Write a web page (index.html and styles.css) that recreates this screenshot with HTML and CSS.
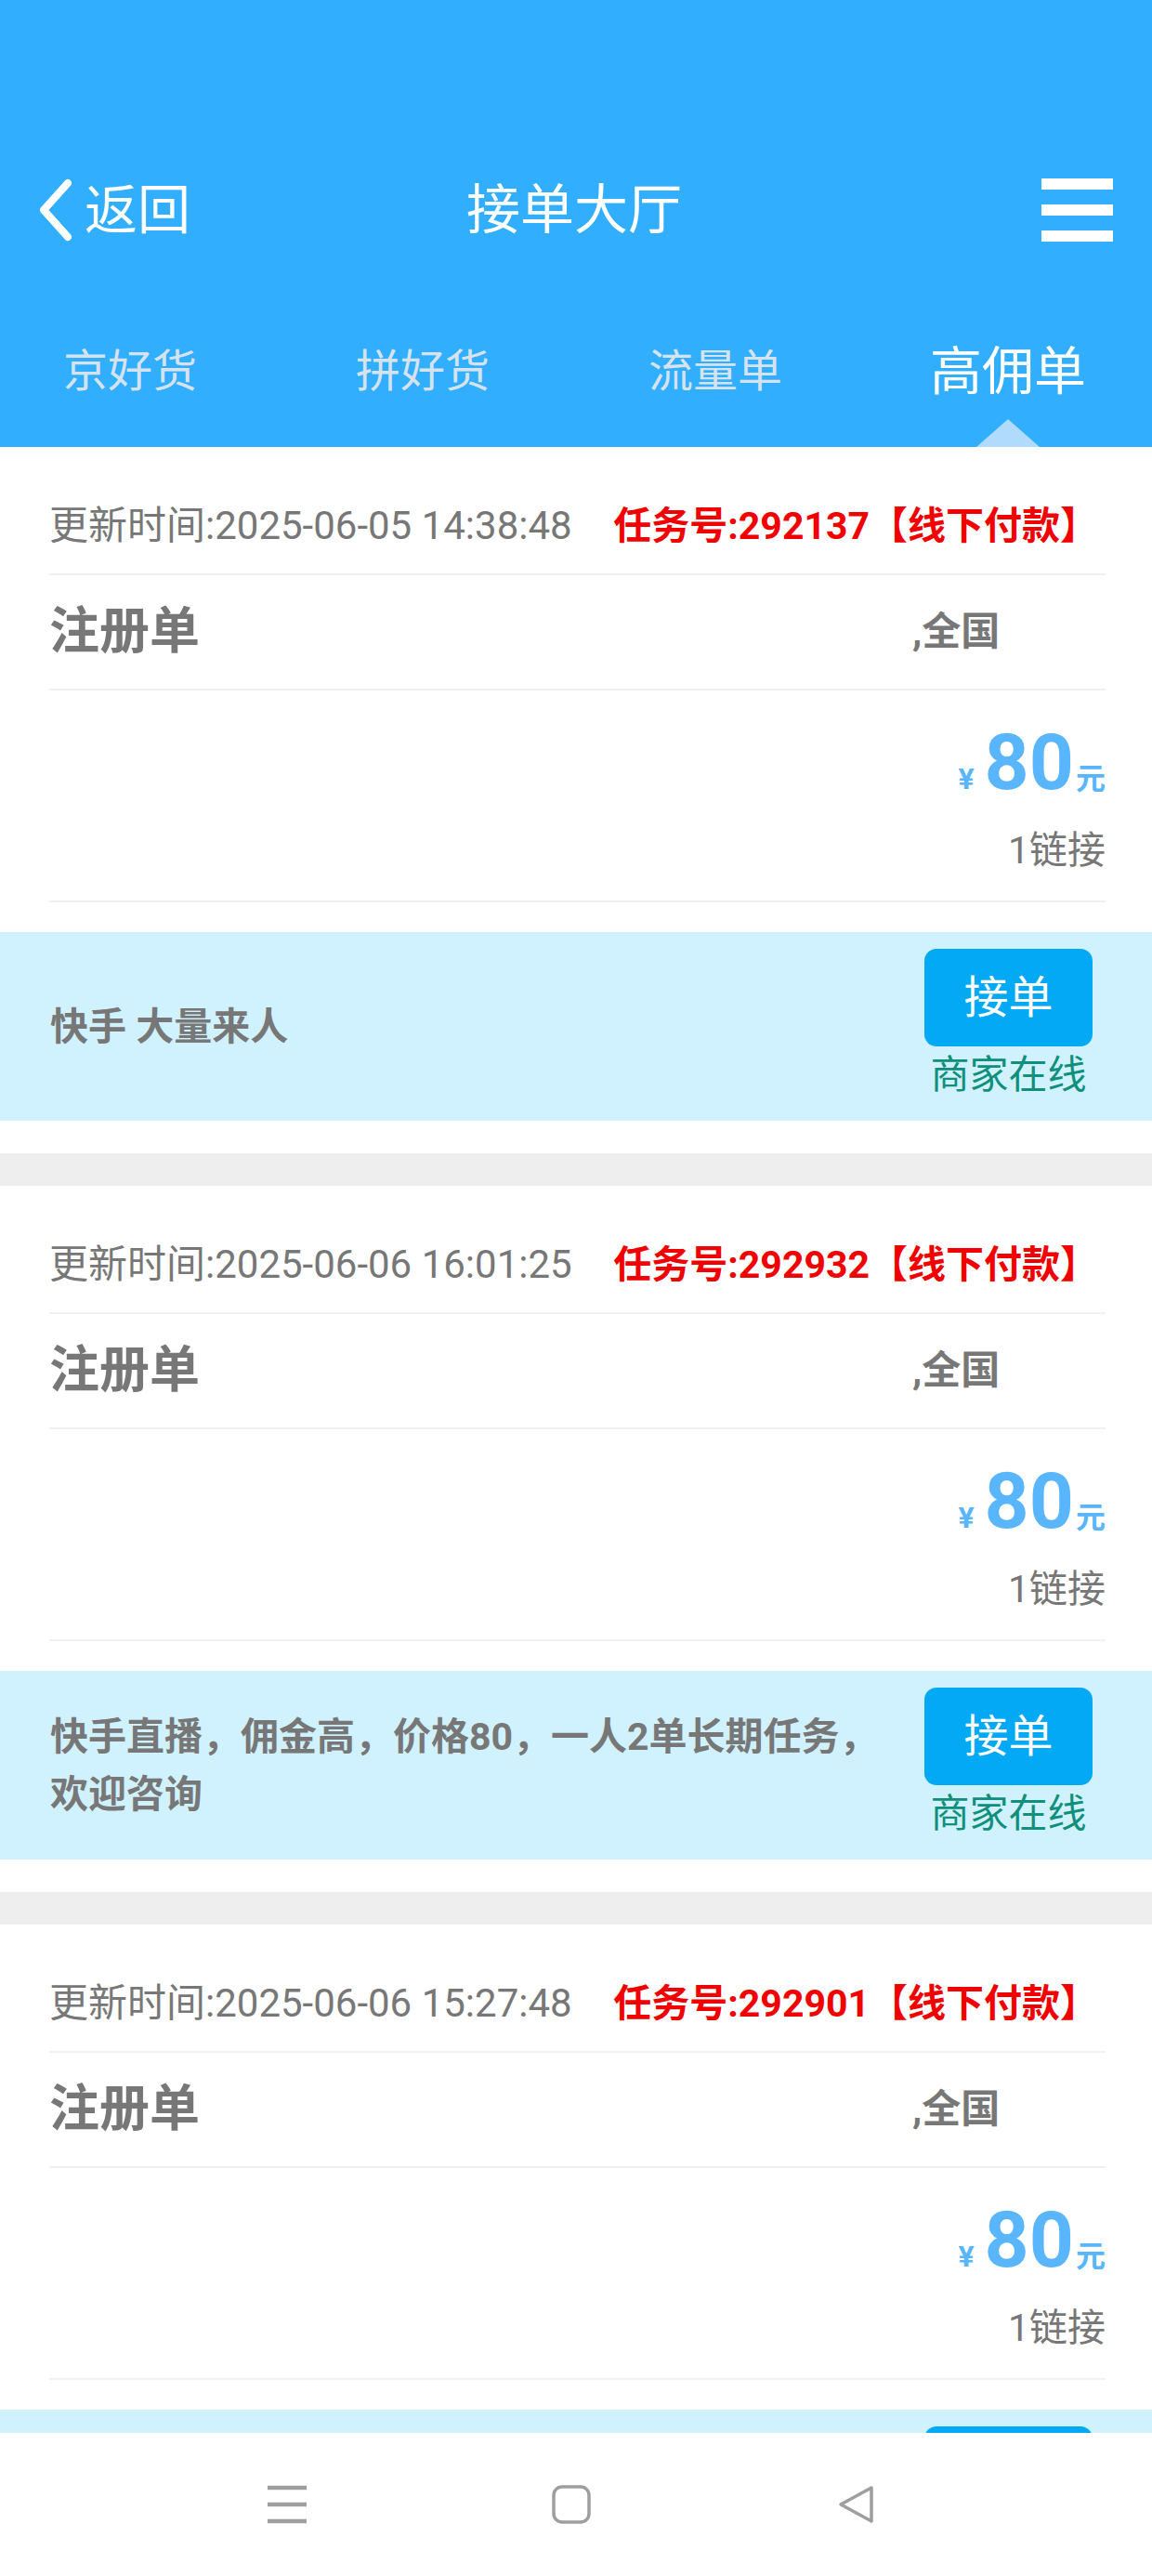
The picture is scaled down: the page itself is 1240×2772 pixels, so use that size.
FILE: index.html
```html
<!DOCTYPE html>
<html lang="zh-CN">
<head>
<meta charset="utf-8">
<title>接单大厅</title>
<link rel="stylesheet" href="styles.css">
</head>
<body>
<div class="app">
  <header class="header">
    <div class="topbar">
      <div class="back">
        <svg viewBox="0 0 40 70" width="40" height="70"><path d="M35 6 L9 35 L35 64" fill="none" stroke="#fff" stroke-width="8" stroke-linecap="round" stroke-linejoin="round"/></svg>
        <span>返回</span>
      </div>
      <div class="title">接单大厅</div>
      <div class="menu"><span></span><span></span><span></span></div>
    </div>
    <nav class="tabs">
      <div class="tab">京好货</div>
      <div class="tab">拼好货</div>
      <div class="tab">流量单</div>
      <div class="tab active">高佣单</div>
    </nav>
  </header>

  <main class="list">
    <section class="card">
      <div class="card-main">
        <div class="meta"><span class="time">更新时间:2025-06-05 14:38:48</span><span class="taskno">任务号:292137【线下付款】</span></div>
        <div class="name-row"><span class="name">注册单</span><span class="region">,全国</span></div>
        <div class="price-block">
          <div class="price"><span class="yen">¥</span>80<span class="yuan">元</span></div>
          <div class="links">1链接</div>
        </div>
      </div>
      <div class="promo">
        <div class="promo-text">快手 大量来人</div>
        <div class="take"><div class="take-btn">接单</div><div class="online">商家在线</div></div>
      </div>
    </section>

    <section class="card">
      <div class="card-main">
        <div class="meta"><span class="time">更新时间:2025-06-06 16:01:25</span><span class="taskno">任务号:292932【线下付款】</span></div>
        <div class="name-row"><span class="name">注册单</span><span class="region">,全国</span></div>
        <div class="price-block">
          <div class="price"><span class="yen">¥</span>80<span class="yuan">元</span></div>
          <div class="links">1链接</div>
        </div>
      </div>
      <div class="promo">
        <div class="promo-text">快手直播，佣金高，价格80，一人2单长期任务，欢迎咨询</div>
        <div class="take"><div class="take-btn">接单</div><div class="online">商家在线</div></div>
      </div>
    </section>

    <section class="card">
      <div class="card-main">
        <div class="meta"><span class="time">更新时间:2025-06-06 15:27:48</span><span class="taskno">任务号:292901【线下付款】</span></div>
        <div class="name-row"><span class="name">注册单</span><span class="region">,全国</span></div>
        <div class="price-block">
          <div class="price"><span class="yen">¥</span>80<span class="yuan">元</span></div>
          <div class="links">1链接</div>
        </div>
      </div>
      <div class="promo">
        <div class="promo-text">快手 大量来人</div>
        <div class="take"><div class="take-btn">接单</div><div class="online">商家在线</div></div>
      </div>
    </section>
  </main>

  <footer class="navbar">
    <svg viewBox="0 0 42 42" width="42" height="42"><path d="M0 3 H42 M0 21 H42 M0 39 H42" stroke="#9e9e9e" stroke-width="4.5" fill="none"/></svg>
    <svg viewBox="0 0 42 42" width="42" height="42"><rect x="2" y="2" width="38" height="38" rx="9" fill="none" stroke="#9e9e9e" stroke-width="3.5"/></svg>
    <svg viewBox="0 0 42 42" width="42" height="42"><path d="M38 3 L5 21 L38 39 Z" fill="none" stroke="#9e9e9e" stroke-width="3.5" stroke-linejoin="round"/></svg>
  </footer>
</div>
</body>
</html>
```

FILE: styles.css
```css
html, body {
  margin: 0;
  padding: 0;
}
body {
  font-family: Roboto, "Noto Sans CJK SC", sans-serif;
  background: #fff;
}
.app {
  width: 1240px;
  height: 2772px;
  display: flex;
  flex-direction: column;
  overflow: hidden;
  background: #fff;
}

/* Header */
.header {
  flex: none;
  background: #31aefd;
  padding-top: 171px;
  overflow: hidden;
}
.topbar {
  height: 110px;
  display: grid;
  grid-template-columns: 1fr auto 1fr;
  align-items: center;
  padding: 0 42px 0 38px;
  color: #fff;
}
.back {
  justify-self: start;
  display: flex;
  align-items: center;
  gap: 13px;
  font-size: 57px;
  line-height: 1;
}
.back svg {
  display: block;
}
.title {
  font-size: 58px;
  line-height: 1;
}
.menu {
  justify-self: end;
  display: flex;
  flex-direction: column;
  gap: 16px;
}
.menu span {
  display: block;
  width: 77px;
  height: 12px;
  background: #fff;
}
.tabs {
  height: 200px;
  display: flex;
  margin-left: -17.5px;
}
.tab {
  flex: 0 0 315px;
  box-sizing: border-box;
  padding-top: 38px;
  display: flex;
  align-items: center;
  justify-content: center;
  font-size: 48px;
  line-height: 1;
  color: #d6e3ee;
  position: relative;
}
.tab.active {
  font-size: 56px;
  color: #fff;
}
.tab.active::after {
  content: "";
  position: absolute;
  bottom: 0;
  left: 50%;
  margin-left: -34px;
  width: 0;
  height: 0;
  border-left: 34px solid transparent;
  border-right: 34px solid transparent;
  border-bottom: 30px solid #b1dbfd;
}

/* List */
.list {
  flex: 1;
  min-height: 0;
  overflow: hidden;
  background: #eeeeee;
  display: flex;
  flex-direction: column;
  gap: 35px;
}
.card {
  flex: none;
  background: #fff;
  padding: 34px 0 35px;
}
.card-main {
  padding: 0 50px 0 53px;
}
.meta {
  height: 102px;
  display: flex;
  align-items: center;
  justify-content: space-between;
  border-bottom: 2px solid #f0f0f0;
  line-height: 1;
}
.time {
  font-size: 42px;
  color: #777;
}
.taskno {
  font-size: 41px;
  font-weight: bold;
  color: #f10000;
  margin-right: 8px;
}
.name-row {
  height: 122px;
  display: flex;
  align-items: center;
  border-bottom: 2px solid #f0f0f0;
  color: #777;
  font-weight: bold;
  line-height: 1;
}
.name {
  flex: 1;
  font-size: 54px;
}
.region {
  width: 208px;
  font-size: 42px;
}
.price-block {
  padding: 36px 0 28px;
  border-bottom: 2px solid #f0f0f0;
  text-align: right;
}
.price {
  height: 84px;
  font-size: 84px;
  line-height: 84px;
  font-weight: bold;
  color: #5ab6fc;
}
.yen {
  font-size: 32px;
  line-height: 32px;
  margin-right: 11px;
}
.yuan {
  font-size: 32px;
  line-height: 32px;
  margin-left: 2px;
}
.links {
  margin-top: 26px;
  font-size: 41px;
  line-height: 52px;
  color: #777;
}

/* Promo strip */
.promo {
  margin-top: 32px;
  background: #d0f2fe;
  display: flex;
  align-items: center;
  padding: 18px 64px 18px 54px;
}
.promo-text {
  flex: 1;
  margin-right: 30px;
  font-size: 41px;
  line-height: 62px;
  font-weight: bold;
  color: #777;
}
.take {
  flex: none;
  width: 181px;
  display: flex;
  flex-direction: column;
  align-items: center;
}
.take-btn {
  width: 181px;
  height: 105px;
  border-radius: 13px;
  background: #03a9f4;
  color: #fff;
  font-size: 48px;
  display: flex;
  align-items: center;
  justify-content: center;
  line-height: 1;
}
.online {
  font-size: 42px;
  line-height: 62px;
  color: #0f8f7c;
  white-space: nowrap;
}

/* Bottom system bar */
.navbar {
  flex: none;
  height: 154px;
  background: #fff;
  display: flex;
  align-items: center;
  justify-content: center;
  gap: 264px;
  padding-right: 10px;
}
.navbar svg {
  display: block;
}
```
